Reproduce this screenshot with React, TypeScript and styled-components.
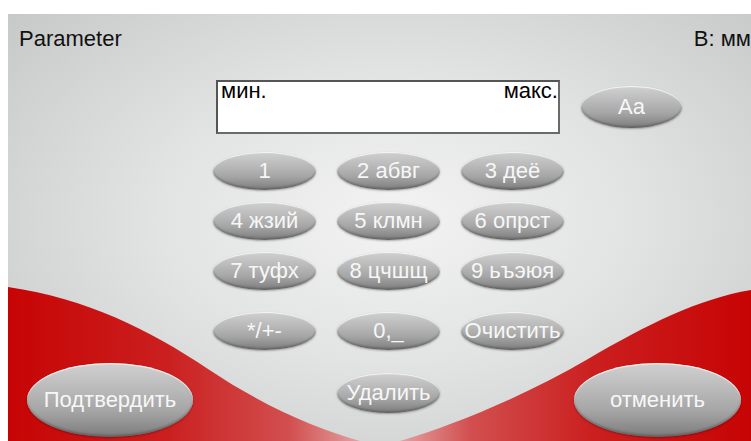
import React from "react"
import styled, { createGlobalStyle } from "styled-components"

const GlobalStyle = createGlobalStyle`
    html, body {
        background: #ffffff;
    }

    body {
        margin: 14px 0 0 8px;
        overflow: hidden;
        font-family: "Liberation Sans", Arial, sans-serif;
    }
`

const digitKeys = ["1", "2 абвг", "3 деё", "4 жзий", "5 клмн", "6 опрст", "7 туфх", "8 цчшщ", "9 ьъэюя"]
const actionKeys = ["*/+-", "0,_", "Очистить"]

// red sweep along the bottom edge of the panel
const Swoosh: React.FC = () => (
    <SwooshLayer viewBox="0 0 743 427" preserveAspectRatio="none">
        <defs>
            <linearGradient id="redLeft" x1="0" y1="0" x2="1" y2="0">
                <stop offset="0" stopColor="#c70404" />
                <stop offset="0.45" stopColor="#cb1f1f" />
                <stop offset="0.8" stopColor="#d24f4f" />
                <stop offset="1" stopColor="#e3a2a2" />
            </linearGradient>
            <linearGradient id="redRight" x1="1" y1="0" x2="0" y2="0">
                <stop offset="0" stopColor="#c70404" />
                <stop offset="0.45" stopColor="#cb1f1f" />
                <stop offset="0.8" stopColor="#d24f4f" />
                <stop offset="1" stopColor="#e3a2a2" />
            </linearGradient>
        </defs>
        <path d="M0,273 C80,285 140,315 200,355 S310,415 352,427 L0,427 Z" fill="url(#redLeft)" />
        <path d="M743,276 C690,285 640,310 580,345 S450,410 392,427 L743,427 Z" fill="url(#redRight)" />
    </SwooshLayer>
)

export default function App() {
    return (
        <>
            <GlobalStyle />
            <Panel>
                <Swoosh />
                <Header>
                    <span>Parameter</span>
                    <span>В: мм</span>
                </Header>

                <DisplayRow>
                    <Display>
                        <Limits>
                            <span>мин.</span>
                            <span>макс.</span>
                        </Limits>
                    </Display>
                    <Pill $w={101} $h={42}>Aa</Pill>
                </DisplayRow>

                <KeyGrid>
                    {digitKeys.map((key) =>
                        <Pill key={key} $w={103} $h={38}>{key}</Pill>
                    )}
                </KeyGrid>

                <KeyGrid $top={22}>
                    {actionKeys.map((key) =>
                        <Pill key={key} $w={103} $h={38}>{key}</Pill>
                    )}
                </KeyGrid>

                <BottomRow>
                    <Pill $w={166} $h={74}>Подтвердить</Pill>
                    <DeleteSlot>
                        <Pill $w={103} $h={40}>Удалить</Pill>
                    </DeleteSlot>
                    <Pill $w={167} $h={74}>отменить</Pill>
                </BottomRow>
            </Panel>
        </>
    )
}

const Panel = styled.div`
    position: relative;
    width: 743px;
    height: 427px;
    overflow: hidden;
    display: flex;
    flex-direction: column;
    background: radial-gradient(ellipse 70% 75% at 52% 48%, #f3f3f3 0%, #e2e3e3 45%, #c6c7c7 100%);
`

const SwooshLayer = styled.svg`
    position: absolute;
    inset: 0;
    width: 100%;
    height: 100%;
    z-index: 0;
`

const Header = styled.div`
    position: relative;
    display: flex;
    justify-content: space-between;
    padding: 12px 0 0 11px;
    font-size: 22px;
    line-height: 26px;
    color: #111111;
`

const DisplayRow = styled.div`
    position: relative;
    display: flex;
    align-items: center;
    gap: 21px;
    margin-top: 28px;
    padding-left: 208px;
`

const Display = styled.div`
    box-sizing: border-box;
    width: 344px;
    height: 54px;
    background: #ffffff;
    border: 2px solid #555555;
    border-right-color: #6a6a6a;
    border-bottom-color: #6a6a6a;
`

const Limits = styled.div`
    display: flex;
    justify-content: space-between;
    padding-left: 3px;
    font-size: 22px;
    line-height: 18px;
    color: #000000;
`

const KeyGrid = styled.div<{ $top?: number }>`
    position: relative;
    display: grid;
    grid-template-columns: repeat(3, 103px);
    column-gap: 21px;
    row-gap: 12px;
    margin-top: ${({ $top }) => $top ?? 18}px;
    padding-left: 205px;
`

const BottomRow = styled.div`
    position: relative;
    display: flex;
    align-items: flex-start;
    margin-top: 13px;
    padding-left: 19px;
`

const DeleteSlot = styled.div`
    margin: 10px 134px 0 144px;
`

const Pill = styled.button<{ $w: number; $h: number }>`
    box-sizing: border-box;
    width: ${({ $w }) => $w}px;
    height: ${({ $h }) => $h}px;
    padding: 0;
    border: none;
    border-radius: 50%;
    display: flex;
    align-items: center;
    justify-content: center;
    white-space: nowrap;
    font-family: "Liberation Sans", Arial, sans-serif;
    font-size: 22px;
    line-height: 1;
    color: #f7f7f7;
    background: linear-gradient(180deg, #d0d0d0 0%, #bababa 35%, #a5a5a5 65%, #8a8a8a 88%, #7a7a7a 100%);
    box-shadow:
        inset 0 1px 1px rgba(255, 255, 255, 0.85),
        inset 0 -2px 2px rgba(0, 0, 0, 0.2),
        0 1px 2px rgba(0, 0, 0, 0.3);
    cursor: pointer;
`
